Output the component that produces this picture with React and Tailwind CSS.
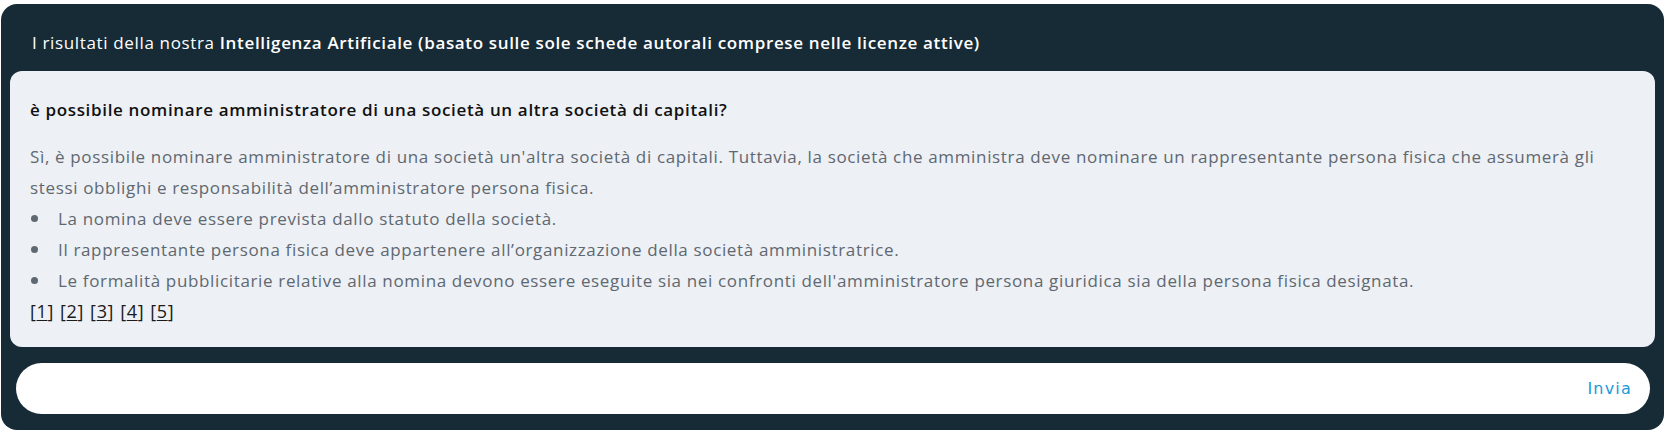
export default function App() {
    const bullets = [
        'La nomina deve essere prevista dallo statuto della società.',
        'Il rappresentante persona fisica deve appartenere all’organizzazione della società amministratrice.',
        "Le formalità pubblicitarie relative alla nomina devono essere eseguite sia nei confronti dell'amministratore persona giuridica sia della persona fisica designata.",
    ];

    return (
        <div className="bg-white pt-1 pl-px pr-[3px] pb-1 font-['Open_Sans',sans-serif] tracking-[0.65px]">
            <div className="bg-[#172b37] rounded-2xl px-[9px] pb-4">
                <div className="h-[67px] pt-[25px] pl-[22px] text-[17px] leading-[28px] text-white">
                    I risultati della nostra{' '}
                    <b className="font-semibold">
                        Intelligenza Artificiale (basato sulle sole schede autorali comprese nelle licenze attive)
                    </b>
                </div>

                <div className="bg-[#edf0f5] rounded-xl px-5 pt-[25px] pb-[20px] text-[17px]">
                    <h3 className="font-semibold text-[#111] leading-[28px]">
                        è possibile nominare amministratore di una società un altra società di capitali?
                    </h3>
                    <div className="mt-[17px] text-[#5f6870] leading-[31px]">
                        <p>
                            Sì, è possibile nominare amministratore di una società un'altra società di capitali. Tuttavia, la società che amministra deve nominare un rappresentante persona fisica che assumerà gli stessi obblighi e responsabilità dell’amministratore persona fisica.
                        </p>
                        <ul>
                            {bullets.map((b) => (
                                <li key={b} className="flex items-start">
                                    <span className="w-[28px] shrink-0 flex justify-start pl-[1px] pt-[12px]">
                                        <span className="w-[7px] h-[7px] rounded-full bg-[#5f6870]" />
                                    </span>
                                    <span>{b}</span>
                                </li>
                            ))}
                        </ul>
                        <div className="text-[#1a1a1a] text-[18px] flex gap-[6px]">
                            {[1, 2, 3, 4, 5].map((n) => (
                                <span key={n}>
                                    [<span className="underline underline-offset-2">{n}</span>]
                                </span>
                            ))}
                        </div>
                    </div>
                </div>

                <div className="mt-4 ml-[6px] mr-[5px] h-[51px] bg-white rounded-full flex items-center justify-end pr-[18px]">
                    <button className="text-[#1b9ad8] text-[16px] tracking-[1.2px] font-['DejaVu_Sans',sans-serif]">Invia</button>
                </div>
            </div>
        </div>
    );
}
